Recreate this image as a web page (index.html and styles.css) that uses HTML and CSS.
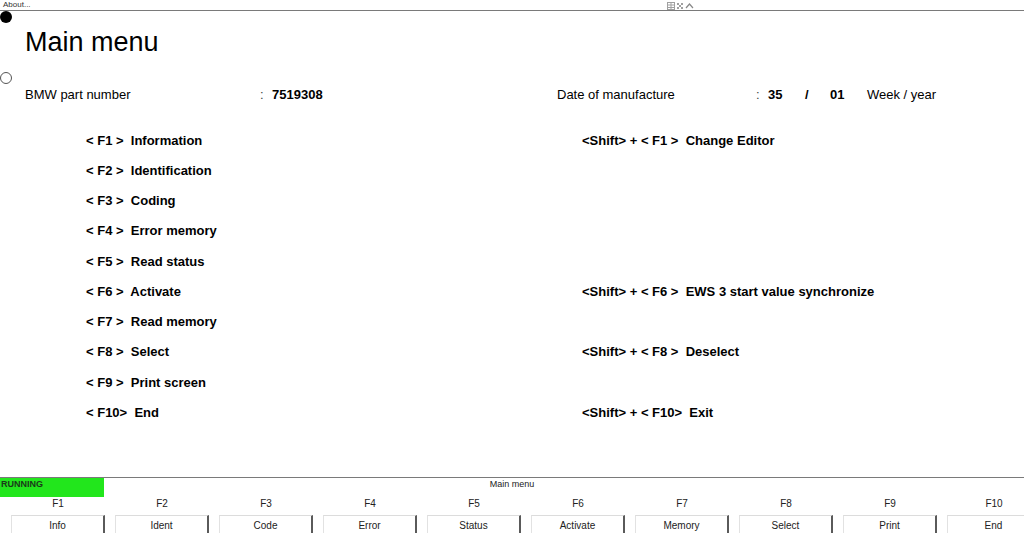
FILE: index.html
```html
<!DOCTYPE html>
<html lang="en">
<head>
    <meta charset="UTF-8">
    <title>Main menu</title>
    <link rel="stylesheet" href="styles.css">
</head>
<body>
    <div class="topbar">
        <span class="about">About...</span>
        <span class="winicons">
            <svg width="28" height="9" viewBox="0 0 28 9">
                <g fill="none" stroke="#a0a0a0" stroke-width="1">
                    <rect x="1.5" y="1.5" width="7" height="7"/>
                    <line x1="1.5" y1="4" x2="8.5" y2="4"/>
                    <line x1="1.5" y1="6.5" x2="8.5" y2="6.5"/>
                    <line x1="5" y1="1.5" x2="5" y2="8.5"/>
                </g>
                <g fill="#a0a0a0">
                    <rect x="11" y="2" width="2" height="2"/>
                    <rect x="15" y="2" width="2" height="2"/>
                    <rect x="11" y="6" width="2" height="2"/>
                    <rect x="15" y="6" width="2" height="2"/>
                    <rect x="13" y="4" width="2" height="2"/>
                </g>
                <polyline points="20,7 23.5,3 27,7" fill="none" stroke="#888" stroke-width="1.2"/>
            </svg>
        </span>
    </div>

    <div class="main">
        <span class="dot dot-on"></span>
        <span class="dot dot-off"></span>

        <h1>Main menu</h1>

        <div class="ident">
            <div class="ident-part">
                <span class="lbl lbl-part">BMW part number</span>
                <span class="colon">:</span>
                <span class="val">7519308</span>
            </div>
            <div class="ident-date">
                <span class="lbl lbl-date">Date of manufacture</span>
                <span class="colon">:</span>
                <span class="val num">35</span>
                <span class="val slash">/</span>
                <span class="val num">01</span>
                <span class="lbl">Week / year</span>
            </div>
        </div>

        <div class="menu">
            <div class="item">&lt; F1 &gt;  Information</div>
            <div class="item">&lt;Shift&gt; + &lt; F1 &gt;  Change Editor</div>
            <div class="item">&lt; F2 &gt;  Identification</div>
            <div class="item"></div>
            <div class="item">&lt; F3 &gt;  Coding</div>
            <div class="item"></div>
            <div class="item">&lt; F4 &gt;  Error memory</div>
            <div class="item"></div>
            <div class="item">&lt; F5 &gt;  Read status</div>
            <div class="item"></div>
            <div class="item">&lt; F6 &gt;  Activate</div>
            <div class="item">&lt;Shift&gt; + &lt; F6 &gt;  EWS 3 start value synchronize</div>
            <div class="item">&lt; F7 &gt;  Read memory</div>
            <div class="item"></div>
            <div class="item">&lt; F8 &gt;  Select</div>
            <div class="item">&lt;Shift&gt; + &lt; F8 &gt;  Deselect</div>
            <div class="item">&lt; F9 &gt;  Print screen</div>
            <div class="item"></div>
            <div class="item">&lt; F10&gt;  End</div>
            <div class="item">&lt;Shift&gt; + &lt; F10&gt;  Exit</div>
        </div>
    </div>

    <div class="status">
        <div class="status-top">
            <div class="running">RUNNING</div>
            <div class="screen-name">Main menu</div>
            <div></div>
        </div>
        <div class="fkeys">
            <div class="fkey"><span class="fname">F1</span><span class="fbtn">Info</span></div>
            <div class="fkey"><span class="fname">F2</span><span class="fbtn">Ident</span></div>
            <div class="fkey"><span class="fname">F3</span><span class="fbtn">Code</span></div>
            <div class="fkey"><span class="fname">F4</span><span class="fbtn">Error</span></div>
            <div class="fkey"><span class="fname">F5</span><span class="fbtn">Status</span></div>
            <div class="fkey"><span class="fname">F6</span><span class="fbtn">Activate</span></div>
            <div class="fkey"><span class="fname">F7</span><span class="fbtn">Memory</span></div>
            <div class="fkey"><span class="fname">F8</span><span class="fbtn">Select</span></div>
            <div class="fkey"><span class="fname">F9</span><span class="fbtn">Print</span></div>
            <div class="fkey"><span class="fname">F10</span><span class="fbtn">End</span></div>
        </div>
    </div>
</body>
</html>
```

FILE: styles.css
```css
* {
    margin: 0;
    padding: 0;
    box-sizing: border-box;
}

body {
    width: 1024px;
    height: 533px;
    overflow: hidden;
    background-color: #fff;
    color: #000;
    font-family: "Liberation Sans", Arial, sans-serif;
}

.topbar {
    height: 11px;
    display: flex;
    align-items: center;
    border-bottom: 1px solid #7a7a7a;
}

.about {
    width: 666px;
    padding-left: 3px;
    font-size: 8px;
    line-height: 10px;
    color: #333;
}

.winicons {
    display: flex;
    height: 10px;
    align-items: center;
}

.main {
    position: relative;
    height: 466px;
}

.dot {
    position: absolute;
    left: 0;
    width: 12px;
    height: 12px;
    border-radius: 50%;
}

.dot-on {
    top: 0;
    background-color: #000;
}

.dot-off {
    top: 61px;
    border: 1px solid #555;
    background-color: #fff;
}

h1 {
    padding: 15px 0 0 25px;
    font-size: 27px;
    line-height: 32px;
    font-weight: normal;
}

.ident {
    display: flex;
    margin-top: 29px;
    padding-left: 25px;
    font-size: 13px;
    line-height: 16px;
}

.ident-part {
    display: flex;
    width: 532px;
}

.ident-date {
    display: flex;
}

.lbl-part {
    width: 235px;
}

.lbl-date {
    width: 199px;
}

.colon {
    width: 12px;
    color: #444;
}

.val {
    font-weight: bold;
}

.num {
    width: 37px;
}

.slash {
    width: 25px;
}

.menu {
    display: grid;
    grid-template-columns: 496px 1fr;
    grid-auto-rows: 30.25px;
    align-items: center;
    margin-top: 22px;
    padding-left: 86px;
    font-size: 13px;
    font-weight: bold;
}

.item {
    white-space: pre;
}

.status {
    border-top: 1px solid #7a7a7a;
    height: 56px;
}

.status-top {
    display: grid;
    grid-template-columns: 104px 1fr 104px;
    height: 19px;
}

.running {
    background-color: #22e61c;
    padding: 1px 0 0 1px;
    font-size: 9px;
    font-weight: bold;
    line-height: 10px;
    color: #1a3a1a;
}

.screen-name {
    text-align: center;
    font-size: 9px;
    line-height: 12px;
    color: #222;
}

.fkeys {
    display: grid;
    grid-template-columns: repeat(10, 104px);
    margin-left: 6px;
}

.fkey {
    display: flex;
    flex-direction: column;
    align-items: center;
    font-size: 10px;
    color: #222;
}

.fname {
    height: 18px;
    line-height: 13px;
}

.fbtn {
    width: 94px;
    height: 20px;
    line-height: 20px;
    text-align: center;
    border-top: 1px solid #dcdcdc;
    border-left: 1px solid #e2e2e2;
    border-right: 2px solid #5a5a5a;
}
```
